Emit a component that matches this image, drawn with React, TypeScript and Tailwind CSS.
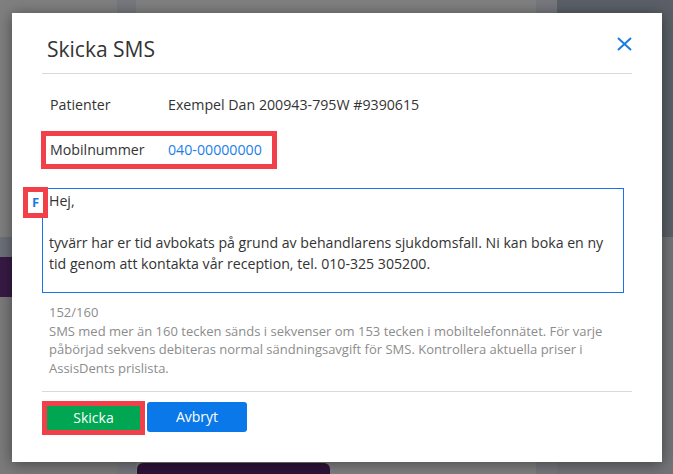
import React from "react";

export default function App() {
  const font = { fontFamily: '"Open Sans", "Noto Sans", sans-serif' };
  return (
    <div className="relative w-[673px] h-[474px] overflow-hidden bg-[#808080]" style={font}>
      {/* background app (dimmed) */}
      <div className="flex h-full w-full">
        <div className="w-[117px] flex flex-col">
          <div className="h-[237px] bg-[#7f7f7f]" />
          <div className="h-[20px] bg-[#6c7079]" />
          <div className="h-[40px] bg-[#381a45]" />
          <div className="flex-1 bg-[#7b7b7b]" />
        </div>
        <div className="w-[19px] bg-[#76787e]" />
        <div className="flex-1 flex flex-col justify-end">
          <div className="ml-[1px] w-[193px] h-[11px] rounded-t-[6px] bg-[#2f1339]" />
        </div>
        <div className="w-[21px] bg-[#76787e]" />
        <div className="w-[116px] flex flex-col">
          <div className="h-[237px] bg-[#5b6068]" />
          <div className="flex-1 bg-[#737478]" />
        </div>
      </div>

      {/* modal */}
      <div className="absolute left-[12px] top-[13px] w-[650px] h-[449px] bg-white px-[30px] shadow-[0_2px_14px_rgba(0,0,0,0.45)]">
        <div className="flex items-start justify-between pt-[22px] pb-[10px] border-b border-[#d6d9de]">
          <div className="ml-[5px] text-[21px] leading-[28px] text-[#333333]">Skicka SMS</div>
          <svg className="mt-[2px]" width="15" height="14" viewBox="0 0 15 14">
            <path d="M1 1 L14 13 M14 1 L1 13" stroke="#1a7be0" strokeWidth="2" fill="none" />
          </svg>
        </div>

        <div className="mt-[21px] ml-[8px] flex text-[14.2px] leading-[20px] text-[#333333]">
          <div className="w-[118px]">Patienter</div>
          <div>Exempel Dan 200943-795W #9390615</div>
        </div>

        <div className="mt-[16px] ml-[-1px] inline-flex h-[38px] items-center border-[5px] border-[#f2404a] pl-[4px] pr-[10px] text-[14.2px] leading-[20px]">
          <div className="w-[118px] text-[#333333]">Mobilnummer</div>
          <div className="text-[#1a7ee8]">040-00000000</div>
        </div>

        <div className="relative mt-[19px] w-[582px] h-[105px] border border-[#1a73e8] pl-[6px] pt-[1px] text-[14.15px] leading-[21px] text-[#333333] whitespace-nowrap">
          <div>Hej,</div>
          <div>&nbsp;</div>
          <div>tyvärr har er tid avbokats på grund av behandlarens sjukdomsfall. Ni kan boka en ny</div>
          <div>tid genom att kontakta vår reception, tel. 010-325 305200.</div>
          <div className="absolute left-[-20px] top-[-2px] w-[25px] h-[31px] border-[5px] border-[#f2404a] bg-white flex items-center justify-center text-[13px] font-bold leading-none text-[#1a7be0]">
            F
          </div>
        </div>

        <div className="mt-[10px] pl-[7px] text-[13px] leading-[18.67px] text-[#8c8c8c]">
          <div>152/160</div>
          <div>SMS med mer än 160 tecken sänds i sekvenser om 153 tecken i mobiltelefonnätet. För varje</div>
          <div>påbörjad sekvens debiteras normal sändningsavgift för SMS. Kontrollera aktuella priser i</div>
          <div>AssisDents prislista.</div>
        </div>

        <div className="mt-[13px] border-t border-[#d6d9de]" />

        <div className="mt-[9px] flex items-start gap-[2px]">
          <div className="w-[103px] h-[34px] border-[5px] border-[#f2404a] bg-[#00a651] flex items-center justify-center text-[14px] text-white">
            Skicka
          </div>
          <div className="mt-[1px] w-[100px] h-[30px] rounded-[3px] bg-[#0a78e8] flex items-center justify-center text-[14px] text-white">
            Avbryt
          </div>
        </div>
      </div>
    </div>
  );
}
